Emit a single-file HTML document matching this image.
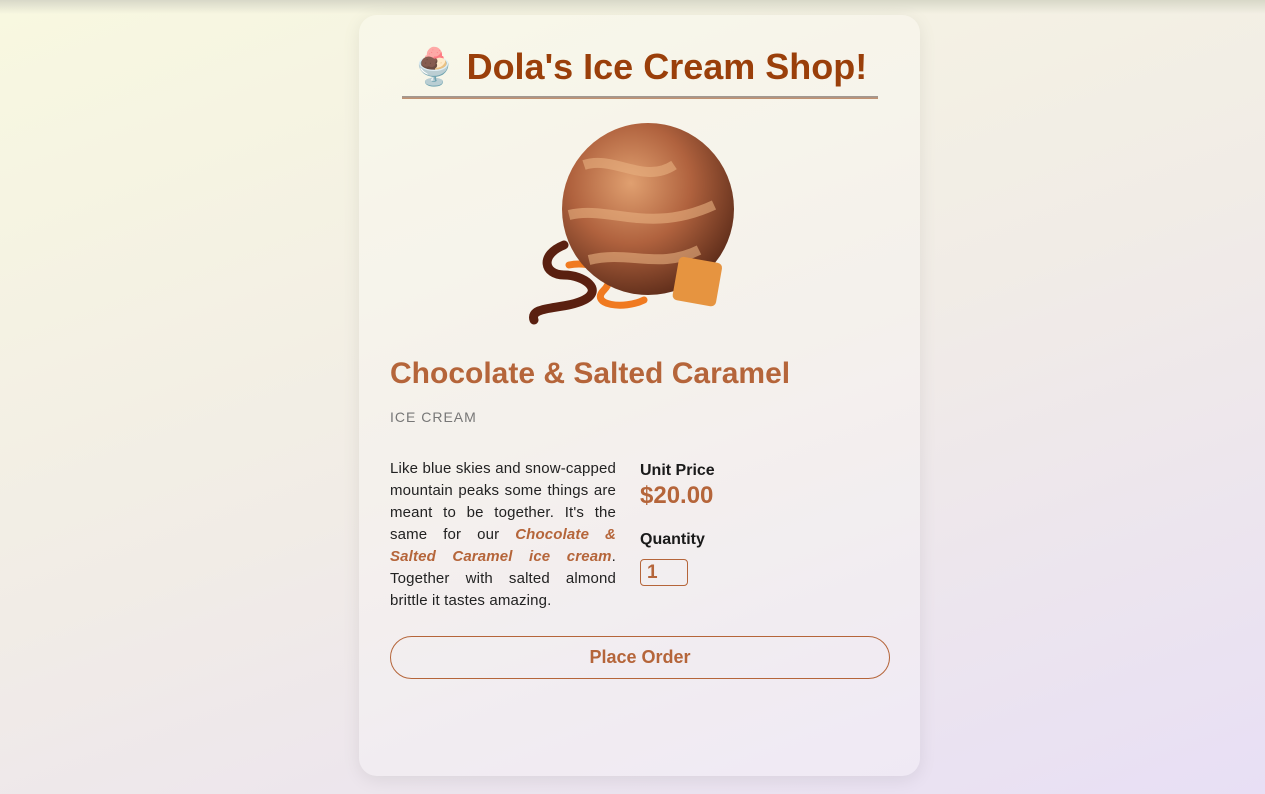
<!DOCTYPE html>
<html><head><meta charset="utf-8"><style>
*{box-sizing:border-box;margin:0;padding:0}
html,body{width:1265px;height:794px;overflow:hidden}
body{font-family:"Liberation Sans",sans-serif;background:linear-gradient(160deg,#f8f8e0 0%,#f1ece6 50%,#e8dff5 100%);position:relative}
.topshadow{position:absolute;left:0;top:0;width:1265px;height:14px;background:linear-gradient(#d8d8c8,rgba(230,230,215,0))}
.card{position:absolute;left:359px;top:15px;width:561px;height:761px;border-radius:18px;background:rgba(255,255,255,0.25);box-shadow:0 4px 18px rgba(0,0,0,0.08)}
h1{position:absolute;left:0;width:561px;top:26px;text-align:center;font-size:36px;font-weight:bold;color:#9a3f0a;line-height:46px;white-space:nowrap}
.line{position:absolute;left:43px;top:81px;width:476px;height:3px;background:linear-gradient(#999,#c9906a)}
h2{position:absolute;left:31px;top:339px;font-size:30px;font-weight:bold;color:#b5653a;line-height:40px}
.sub{position:absolute;left:31px;top:394px;font-size:14px;letter-spacing:1px;color:#777}
.desc{position:absolute;left:31px;top:443px;width:226px;font-size:15px;line-height:22px;text-align:justify;color:#222;letter-spacing:0.15px}
.desc b{color:#b5653a;font-style:italic}
.lab{position:absolute;left:281px;font-size:16px;font-weight:bold;color:#1a1a1a}
.price{position:absolute;left:281px;top:467px;font-size:24px;font-weight:bold;color:#b5653a}
.qty{position:absolute;left:281px;top:544px;width:48px;height:27px;border:1px solid #b5653a;border-radius:4px;font-size:19px;font-weight:bold;color:#b5653a;padding:2px 0 0 6px}
.btn{position:absolute;left:31px;top:621px;width:500px;height:43px;border:1px solid #b5653a;border-radius:22px;text-align:center;line-height:41px;font-size:18px;font-weight:bold;color:#b5653a}
</style></head><body>
<div class="topshadow"></div>
<div class="card">
<h1><span style="font-family:'Noto Sans CJK SC',sans-serif;font-size:36px">🍨</span> Dola's Ice Cream Shop!</h1>
<div class="line"></div>
<svg style="position:absolute;left:165px;top:100px" width="230" height="215" viewBox="0 0 230 215">
<defs><radialGradient id="b" cx="0.4" cy="0.35" r="0.7"><stop offset="0" stop-color="#e0a070"/><stop offset="0.5" stop-color="#b0623e"/><stop offset="1" stop-color="#5a2a18"/></radialGradient></defs>
<path d="M40 130 C15 140 20 160 40 160 C60 160 80 175 60 185 C40 195 5 190 10 205" stroke="#5a2010" stroke-width="9" fill="none" stroke-linecap="round"/>
<path d="M45 150 C70 145 95 160 80 175 C65 190 100 195 120 185" stroke="#f07a20" stroke-width="7" fill="none" stroke-linecap="round"/>
<circle cx="124" cy="94" r="86" fill="url(#b)"/>
<path d="M60 50 C90 40 120 70 150 50 M45 100 C85 90 125 120 190 90 M65 145 C105 135 135 155 175 135" stroke="#e8b080" stroke-width="10" fill="none" opacity="0.6"/>
<rect x="152" y="145" width="44" height="44" rx="5" fill="#e69440" transform="rotate(10 176 163)"/>
</svg>
<h2>Chocolate &amp; Salted Caramel</h2>
<div class="sub">ICE CREAM</div>
<div class="desc">Like blue skies and snow-capped mountain peaks some things are meant to be together. It's the same for our <b>Chocolate &amp; Salted Caramel ice cream</b>. Together with salted almond brittle it tastes amazing.</div>
<div class="lab" style="top:447px">Unit Price</div>
<div class="price">$20.00</div>
<div class="lab" style="top:516px">Quantity</div>
<div class="qty">1</div>
<div class="btn">Place Order</div>
</div>
</body></html>
